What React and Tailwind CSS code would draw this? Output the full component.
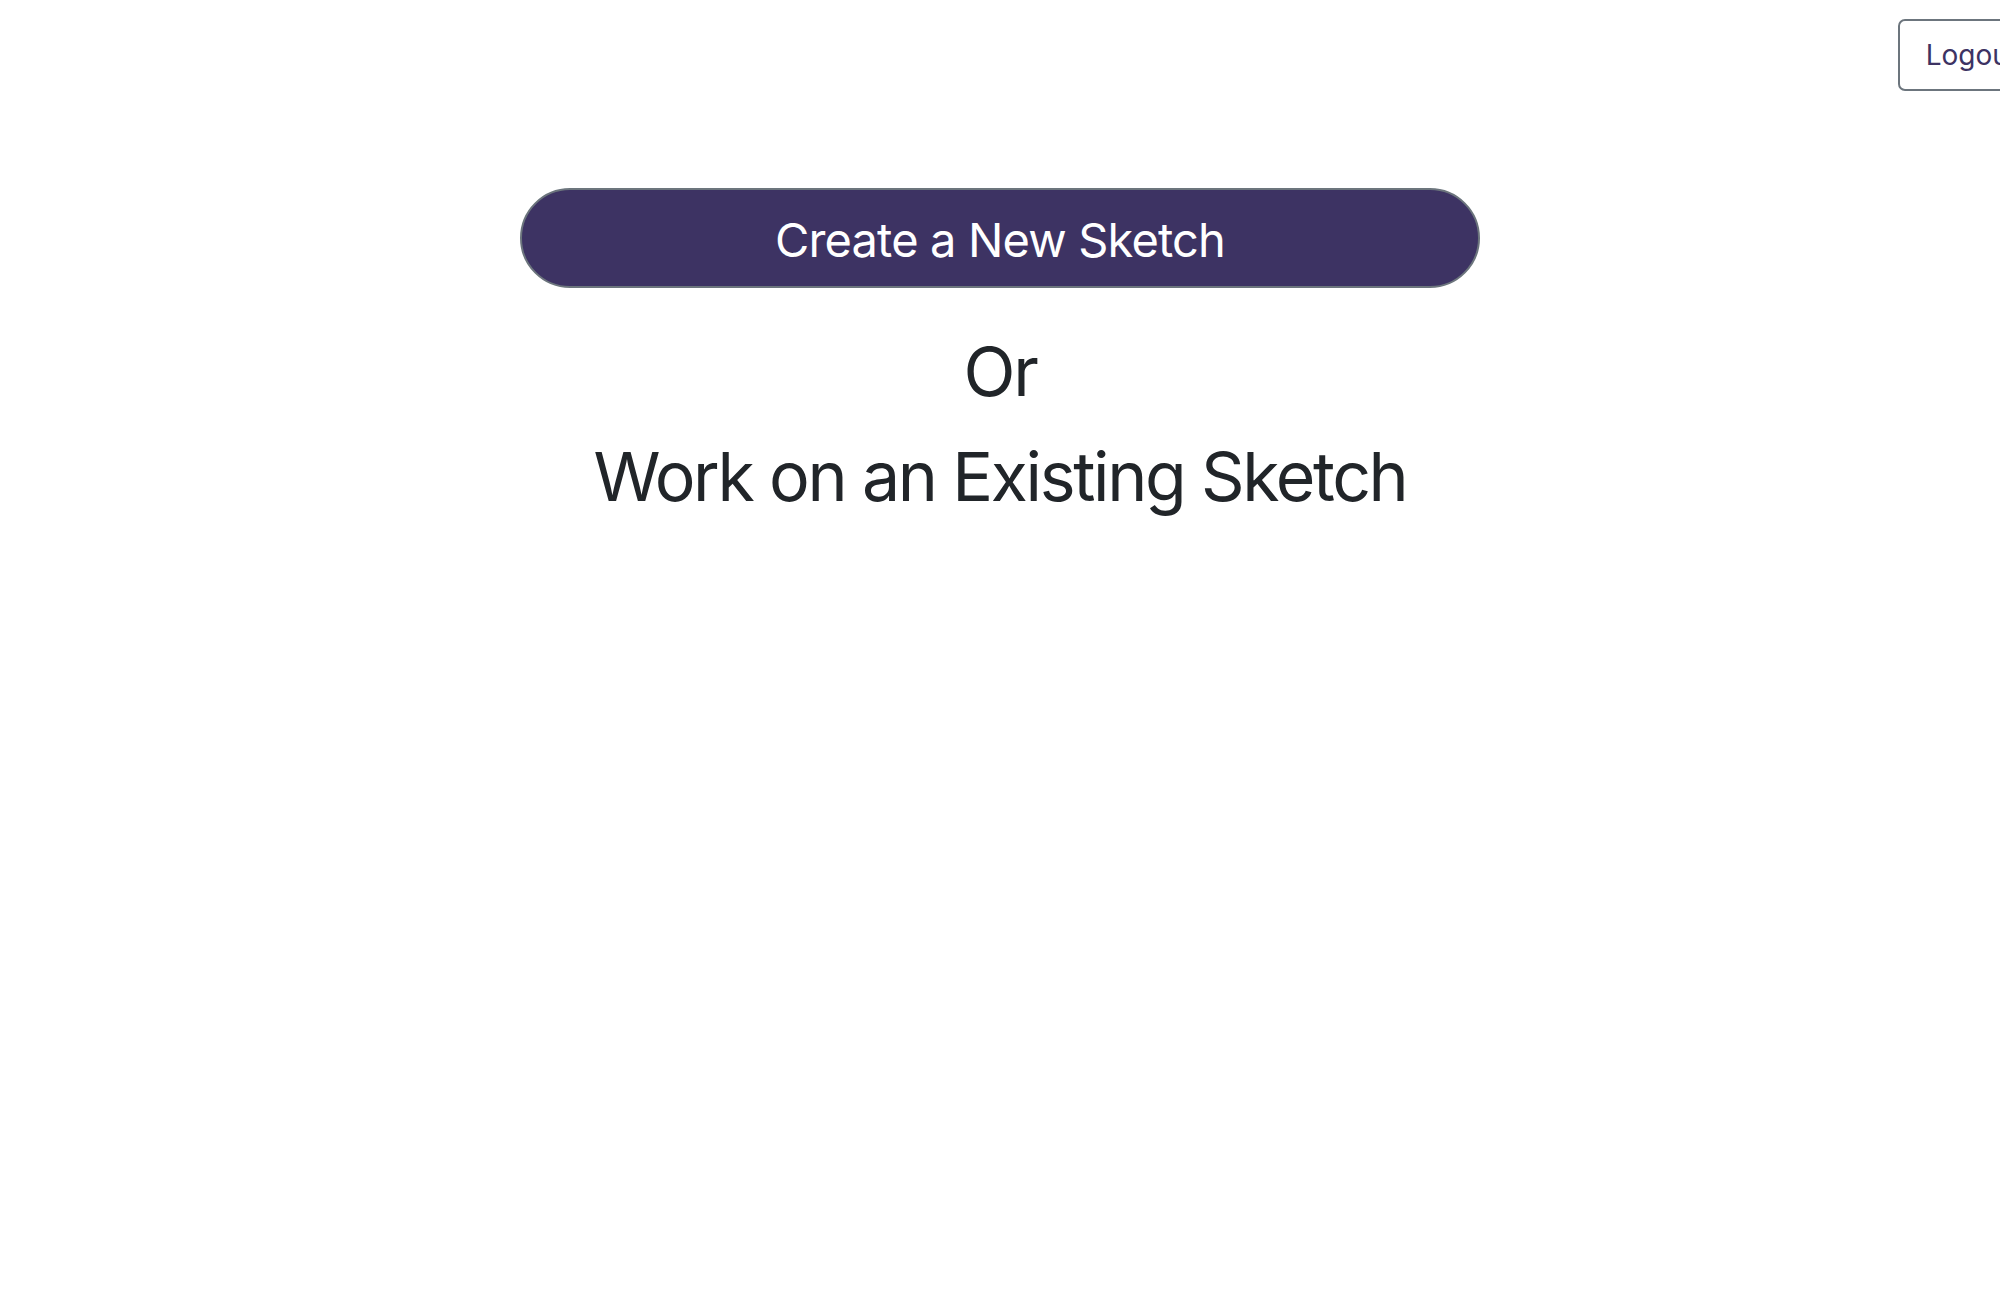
const App = () => {
  return (
    <div
      className="min-h-screen w-full overflow-hidden bg-white text-[#212529]"
      style={{ fontFamily: "Inter, 'Noto Sans', sans-serif" }}
    >
      <header className="flex justify-end pt-[19px]">
        <button className="-mr-[46px] h-[72px] rounded-[7px] border-2 border-[#6c757d] bg-white px-[26px] text-[28px] text-[#3d3363]">
          Logout
        </button>
      </header>
      <main className="mx-auto mt-[97px] flex w-[960px] flex-col items-center">
        <button className="h-[100px] w-full rounded-full border-2 border-[#6c757d] bg-[#3d3363] pt-[5px] text-[47px] tracking-[-0.018em] text-white">
          Create a New Sketch
        </button>
        <h2 className="mt-[43px] text-[68px] leading-[1.2] tracking-[-0.035em]">Or</h2>
        <h2 className="mt-[23px] text-[68px] leading-[1.2] tracking-[-0.035em]">
          Work on an Existing Sketch
        </h2>
      </main>
    </div>
  );
};

export default App;
